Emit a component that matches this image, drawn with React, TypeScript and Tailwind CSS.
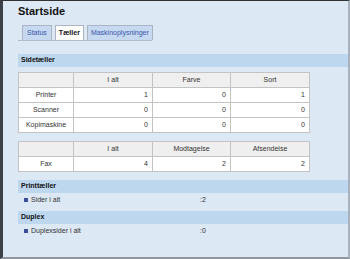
import React from "react";

const cols = ["w-[55px]", "w-[79px]", "w-[78px]", "w-[79px]"];

function Table({ header, rows }: { header: string[]; rows: (string | number)[][] }) {
  return (
    <table className="w-[291px] border-collapse table-fixed text-[7px] text-[#333]">
      <colgroup>
        {cols.map((c, i) => (
          <col key={i} className={c} />
        ))}
      </colgroup>
      <thead>
        <tr className="h-[15px]">
          <th className="border border-[#c3c3c3] bg-[#efefef]"></th>
          {header.map((h) => (
            <th key={h} className="border border-[#c3c3c3] bg-[#efefef] font-normal text-center">
              {h}
            </th>
          ))}
        </tr>
      </thead>
      <tbody>
        {rows.map((r) => (
          <tr key={String(r[0])} className="h-[15px] bg-white">
            <td className="border border-[#c3c3c3] text-center">{r[0]}</td>
            {r.slice(1).map((v, i) => (
              <td key={i} className="border border-[#c3c3c3] text-right pr-[4px]">
                {v}
              </td>
            ))}
          </tr>
        ))}
      </tbody>
    </table>
  );
}

function Bar({ title, className = "" }: { title: string; className?: string }) {
  return (
    <div className={"h-[13px] bg-[#bdd7ee] text-[7px] font-bold text-[#111] pl-[3px] flex items-center " + className}>
      {title}
    </div>
  );
}

function Item({ label, value }: { label: string; value: string }) {
  return (
    <div className="h-[14px] flex items-center text-[7px] text-[#333]">
      <div className="w-[182px] flex items-center pl-[6px]">
        <span className="w-[4px] h-[4px] bg-[#3b4e9c] mr-[3px]"></span>
        <span>{label}</span>
      </div>
      <span>{value}</span>
    </div>
  );
}

export default function App() {
  return (
    <div className="w-[350px] h-[259px] overflow-hidden bg-[#dde8f5] border-l-[3px] border-l-[#3c4047] border-t border-t-[#2f3237] border-r-2 border-r-[#a9b1bc] border-b-2 border-b-[#8f969f] pl-[15px] font-['Liberation_Sans',Arial,sans-serif]">
      <div className="pt-[3px] text-[11px] leading-[14px] font-bold text-[#111]">Startside</div>
      <div className="mt-[7px] w-[134px] flex items-end gap-[3px] pl-[4px] border-b border-[#b3bcc8]">
        <div className="h-[15px] px-[4px] border border-b-0 border-[#aab4c2] bg-[#c6d9f1] text-[#3856a8] text-[7px] flex items-center">
          Status
        </div>
        <div className="h-[15px] px-[3px] border border-b-0 border-[#aab4c2] bg-white text-[#111] font-bold text-[7px] flex items-center">
          Tæller
        </div>
        <div className="h-[15px] px-[3px] border border-b-0 border-[#aab4c2] bg-[#c6d9f1] text-[#3856a8] text-[7px] flex items-center">
          Maskinoplysninger
        </div>
      </div>
      <Bar title="Sidetæller" className="mt-[13px]" />
      <div className="mt-[5px]">
        <Table
          header={["I alt", "Farve", "Sort"]}
          rows={[
            ["Printer", 1, 0, 1],
            ["Scanner", 0, 0, 0],
            ["Kopimaskine", 0, 0, 0],
          ]}
        />
      </div>
      <div className="mt-[8px]">
        <Table header={["I alt", "Modtagelse", "Afsendelse"]} rows={[["Fax", 4, 2, 2]]} />
      </div>
      <Bar title="Printtæller" className="mt-[8px]" />
      <Item label="Sider i alt" value=":2" />
      <Bar title="Duplex" className="mt-[4px]" />
      <Item label="Duplexsider i alt" value=":0" />
    </div>
  );
}
